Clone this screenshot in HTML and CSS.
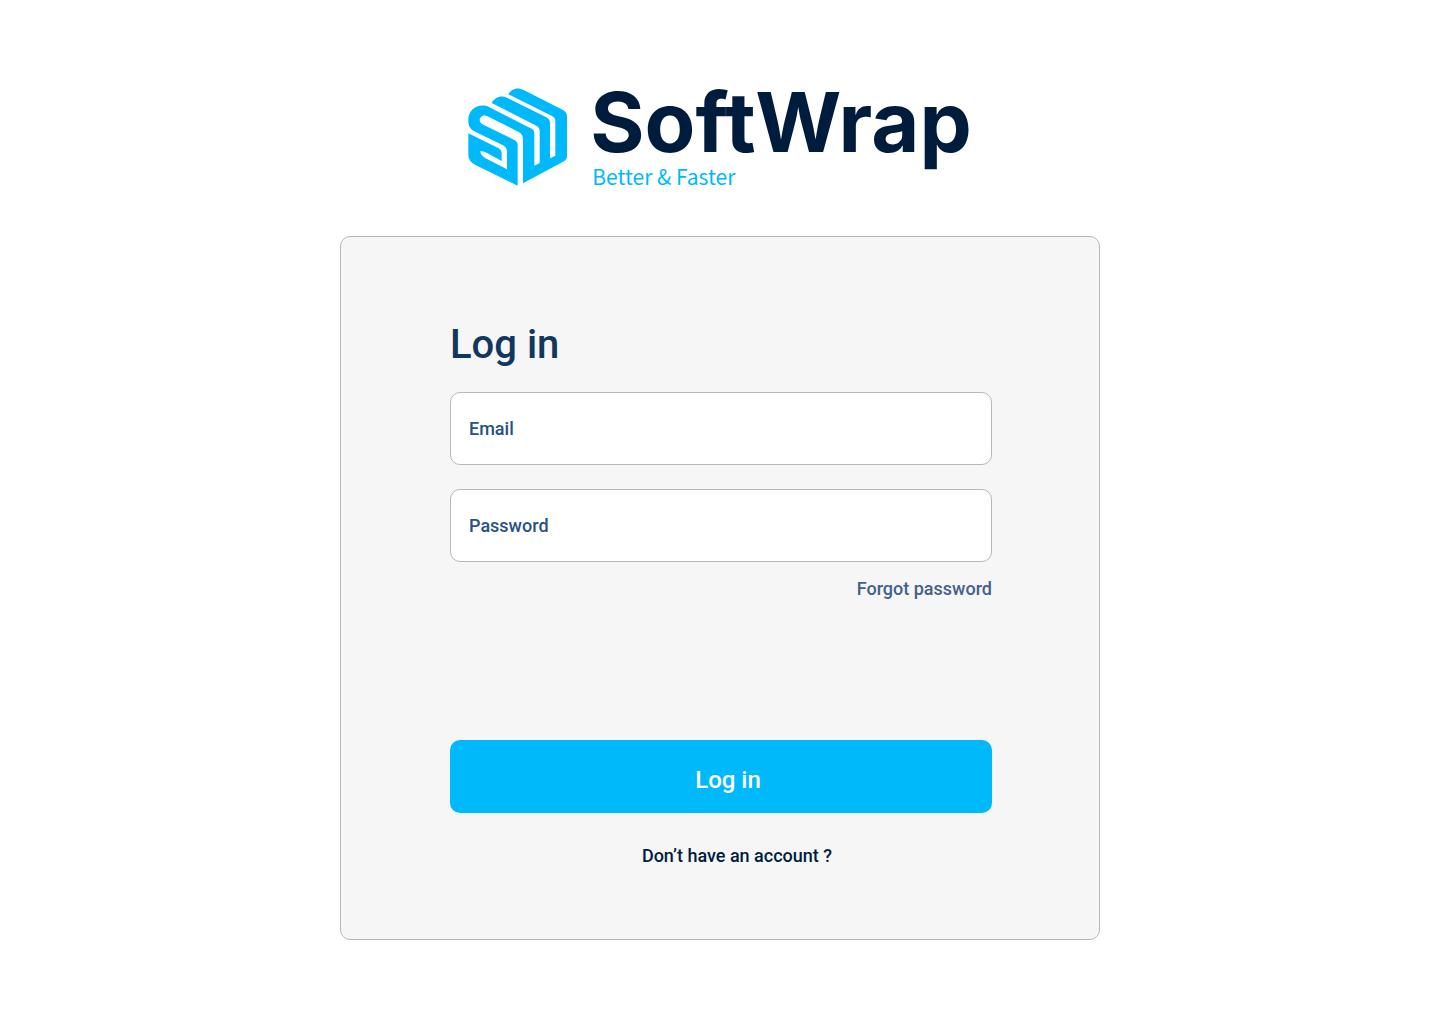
FILE: index.html
```html
<!DOCTYPE html>
<html lang="en">
<head>
  <meta charset="utf-8">
  <meta name="viewport" content="width=device-width, initial-scale=1">
  <title>SoftWrap – Log in</title>
  <link rel="stylesheet" href="styles.css">
</head>
<body>
  <div class="page">
    <header class="brand">
      <svg class="brand-mark" viewBox="27 25 300 294" aria-hidden="true">
        <path fill="#00b9fb" d="M28 118 C28 88 62 68 90 82 L218 147 Q226 151 226 161 V258 L242 250 V154 Q242 143 232 138 L98 70 C106 54 125 46 144 54 L262 113 Q273 119 273 130 V236 L289 228 V124 Q289 114 279 109 L148 44 C156 27 176 21 194 31 L312 91 Q324 98 324 111 V230 Q324 240 315 245 L192 311 V180 Q192 163 179 157 L84 109 C74 104 62 111 62 121 C62 128 66 132 73 135 L166 181 Q176 186 176 196 V318 L51 257 Q28 246 28 225 V161 L119 206 Q128 211 128 219 V244 L80 218 Q71 214 64 215 Q65 227 78 235 L144 269 V217 Q144 203 132 197 L46 155 Q28 146 28 127 Z"/>
      </svg>
      <div class="brand-text">
        <span class="brand-name">SoftWrap</span>
        <span class="brand-tagline">Better &amp; Faster</span>
      </div>
    </header>

    <main class="card">
      <h1 class="title">Log in</h1>
      <form class="form">
        <input class="field" type="email" placeholder="Email" aria-label="Email">
        <input class="field" type="password" placeholder="Password" aria-label="Password">
        <a class="forgot" href="#">Forgot password</a>
        <button class="submit" type="submit">Log in</button>
      </form>
      <a class="signup" href="#">Don’t have an account ?</a>
    </main>
  </div>
</body>
</html>
```

FILE: styles.css
```css
* {
  box-sizing: border-box;
}

body {
  margin: 0;
  background: #fff;
  font-family: Roboto, "Liberation Sans", sans-serif;
  font-weight: 500;
}

.page {
  display: flex;
  flex-direction: column;
  align-items: center;
  padding: 80px 24px;
}

.brand {
  display: flex;
  gap: 22px;
  height: 116px;
}

.brand-mark {
  width: 100px;
  height: 98px;
  margin-top: 8px;
}

.brand-text {
  display: flex;
  flex-direction: column;
  padding-top: 4px;
}

.brand-name {
  color: #001c3d;
  font-family: Inter, sans-serif;
  font-size: 83px;
  font-weight: 700;
  line-height: 76px;
}

.brand-tagline {
  padding-left: 2px;
  color: #00b9fb;
  font-family: "Noto Sans CJK SC", sans-serif;
  font-size: 21px;
  font-weight: 400;
  line-height: 32px;
}

.card {
  display: flex;
  flex-direction: column;
  width: 100%;
  max-width: 760px;
  margin-top: 40px;
  padding: 84px 107px 71px 109px;
  border: 1px solid #b8b8b8;
  border-radius: 10px;
  background: #f6f6f6;
}

.title {
  margin: 0 0 23px;
  color: #12375f;
  font-size: 40px;
  font-weight: 500;
  line-height: 48px;
}

.form {
  display: flex;
  flex-direction: column;
}

.field {
  width: 100%;
  height: 73px;
  margin-bottom: 24px;
  padding: 0 18px;
  border: 1px solid #b8b8b8;
  border-radius: 10px;
  background: #fff;
  color: #265180;
  font: inherit;
  font-size: 18px;
}

.field::placeholder {
  color: #265180;
  opacity: 1;
}

.forgot {
  align-self: flex-end;
  margin-top: -9px;
  color: #41618a;
  font-size: 18px;
  line-height: 24px;
  text-decoration: none;
}

.submit {
  height: 73px;
  margin-top: 139px;
  padding: 6px 0 0 14px;
  border: 0;
  border-radius: 10px;
  background: #00b9fb;
  color: #fff;
  font: inherit;
  font-size: 24px;
}

.signup {
  align-self: center;
  margin-top: 31px;
  padding-left: 32px;
  color: #001c3d;
  font-size: 18px;
  line-height: 24px;
  text-decoration: none;
}
```
